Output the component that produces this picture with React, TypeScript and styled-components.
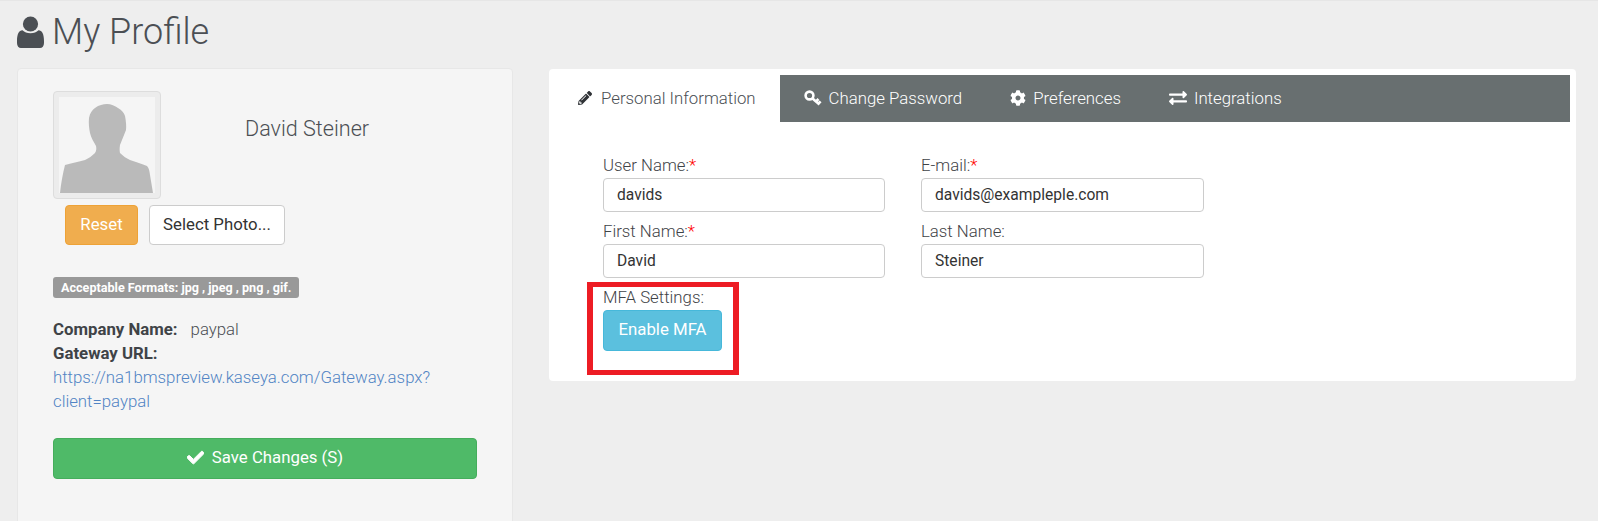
import styled, { createGlobalStyle } from "styled-components";
import { FaPencilAlt, FaCog, FaExchangeAlt, FaCheck } from "react-icons/fa";

const GlobalStyle = createGlobalStyle`
  html, body {
    margin: 0;
    padding: 0;
    height: 100%;
    overflow: hidden;
    background: #eeeeee;
    font-family: Roboto, "Liberation Sans", sans-serif;
    color: #4b4f54;
  }
  * { box-sizing: border-box; }
`;

function UserIcon() {
  return (
    <UserGlyph viewBox="0 0 27 32">
      <circle cx="13.5" cy="8" r="7.6" />
      <path d="M5.5 14.2 C7.5 16.2 10 17.2 13.5 17.2 C17 17.2 19.5 16.2 21.5 14.2 C25 14.2 27 18 27 25 V27 C27 30 25.3 32 23 32 H4 C1.7 32 0 30 0 27 V25 C0 18 2 14.2 5.5 14.2 Z" />
    </UserGlyph>
  );
}

function KeyIcon() {
  return (
    <KeyGlyph viewBox="0 0 18 16">
      <circle cx="5.5" cy="5.5" r="3.9" />
      <path d="M8.5 8.5 L15.5 14.5 M12 11.5 L14.5 9 M14.5 13.6 L16.6 11.4" />
    </KeyGlyph>
  );
}

export default function App() {
  return (
    <>
      <GlobalStyle />
      <Page>
        <Title>
          <UserIcon />
          <span>My Profile</span>
        </Title>
        <Columns>
          <SideCard>
            <PhotoRow>
              <Thumb>
                <Silhouette viewBox="0 0 96 96">
                  <path d="M1 96 C2 86 4 76 6 68 C12 66 20 65 26 63 C30 61 33 59 36 56 C37.5 54 37.5 51 37 49 C35 45 32 41 31 36 C30 31 29.5 26 30 21 C31 16 33 13 36 11 C40 8 44 7 48 7 C52 7 56 9 59 11 C63 13 65 16 66 19 C67 24 67.5 29 67 33 C65 38 63 43 61 48 C60.5 51 60.5 54 61 56 C64 59 67 61 71 63 C77 65 83 67 88 69 C90 71 90.5 74 91 78 C92 84 93 90 94 96 Z" />
                </Silhouette>
              </Thumb>
              <UserName>David Steiner</UserName>
            </PhotoRow>
            <PhotoButtons>
              <ResetButton>Reset</ResetButton>
              <SelectButton>Select Photo...</SelectButton>
            </PhotoButtons>
            <FormatBadge>Acceptable Formats: jpg , jpeg , png , gif.</FormatBadge>
            <Details>
              <div>
                <strong>Company Name:</strong>
                <CompanyValue>paypal</CompanyValue>
              </div>
              <div>
                <strong>Gateway URL:</strong>
              </div>
              <GatewayLink href="#">
                https://na1bmspreview.kaseya.com/Gateway.aspx?
                <br />
                client=paypal
              </GatewayLink>
            </Details>
            <SaveButton>
              <FaCheck size={17} stroke="currentColor" strokeWidth={30} />
              Save Changes (S)
            </SaveButton>
          </SideCard>
          <MainCard>
            <TabBar>
              <Tab $active>
                <FaPencilAlt size={14} />
                Personal Information
              </Tab>
              <Tab>
                <KeyIcon />
                Change Password
              </Tab>
              <Tab>
                <FaCog size={16} />
                Preferences
              </Tab>
              <Tab>
                <FaExchangeAlt size={18} />
                Integrations
              </Tab>
            </TabBar>
            <FormGrid>
              <Field>
                <Label>
                  User Name:<Req>*</Req>
                </Label>
                <Input readOnly value="davids" />
              </Field>
              <Field>
                <Label>
                  E-mail:<Req>*</Req>
                </Label>
                <Input readOnly value="davids@exampleple.com" />
              </Field>
              <Field>
                <Label>
                  First Name:<Req>*</Req>
                </Label>
                <Input readOnly value="David" />
              </Field>
              <Field>
                <Label>Last Name:</Label>
                <Input readOnly value="Steiner" />
              </Field>
              <MfaField>
                <Label>MFA Settings:</Label>
                <MfaButton>Enable MFA</MfaButton>
                <Highlight />
              </MfaField>
            </FormGrid>
          </MainCard>
        </Columns>
      </Page>
    </>
  );
}

const Page = styled.div`
  height: 521px;
  overflow: hidden;
  padding: 0 22px 0 17px;
  border-top: 1px solid #e6e6e6;
`;

const Title = styled.h1`
  display: flex;
  align-items: center;
  gap: 8px;
  height: 67px;
  margin: 0;
  padding-bottom: 5px;
  font-size: 36px;
  font-weight: 300;
  color: #4b4f54;
`;

const UserGlyph = styled.svg`
  flex: none;
  width: 27px;
  height: 32px;
  fill: #4b4f54;
`;

const KeyGlyph = styled.svg`
  flex: none;
  width: 18px;
  height: 16px;
  fill: none;
  stroke: currentColor;
  stroke-width: 2.6;
`;

const Columns = styled.div`
  display: flex;
  align-items: flex-start;
  gap: 36px;
`;

const SideCard = styled.div`
  flex: none;
  width: 496px;
  height: 480px;
  padding: 22px 34px 0 35px;
  background: #f5f5f5;
  border: 1px solid #e7e7e7;
  border-radius: 4px;
`;

const PhotoRow = styled.div`
  display: flex;
  align-items: flex-start;
`;

const Thumb = styled.div`
  flex: none;
  width: 108px;
  height: 108px;
  padding: 5px;
  background: #ececec;
  border: 1px solid #dddddd;
  border-radius: 4px;
`;

const Silhouette = styled.svg`
  display: block;
  width: 96px;
  height: 96px;
  background: #f5f5f5;
  fill: #bababa;
`;

const UserName = styled.div`
  margin: 26px 0 0 84px;
  font-size: 21.6px;
  font-weight: 300;
  line-height: 24px;
`;

const PhotoButtons = styled.div`
  display: flex;
  gap: 11px;
  margin: 6px 0 0 12px;
`;

const ResetButton = styled.button`
  width: 73px;
  height: 40px;
  padding: 0 0 2px;
  font: 400 16.8px Roboto, sans-serif;
  color: #ffffff;
  background: #f0ad4e;
  border: 1px solid #eea236;
  border-radius: 4px;
`;

const SelectButton = styled.button`
  width: 136px;
  height: 40px;
  padding: 0 0 2px;
  font: 400 16.8px Roboto, sans-serif;
  color: #333333;
  background: #ffffff;
  border: 1px solid #cccccc;
  border-radius: 4px;
`;

const FormatBadge = styled.div`
  display: inline-block;
  height: 21px;
  margin-top: 32px;
  padding: 0 8px;
  font-size: 12.6px;
  font-weight: 700;
  line-height: 21px;
  color: #ffffff;
  background: #999999;
  border-radius: 3px;
`;

const Details = styled.div`
  margin-top: 19px;
  font-size: 16.8px;
  font-weight: 300;
  line-height: 24px;

  strong {
    font-weight: 700;
    color: #3f4347;
  }
`;

const CompanyValue = styled.span`
  margin-left: 13px;
`;

const GatewayLink = styled.a`
  color: #5184c4;
  text-decoration: none;
`;

const SaveButton = styled.button`
  display: flex;
  align-items: center;
  justify-content: center;
  gap: 8px;
  width: 424px;
  height: 41px;
  margin-top: 25px;
  padding: 0 0 3px;
  font: 400 16.8px Roboto, sans-serif;
  color: #ffffff;
  background: #4fba68;
  border: 1px solid #45ad5c;
  border-radius: 4px;
`;

const MainCard = styled.div`
  flex: none;
  width: 1027px;
  height: 312px;
  margin-top: 1px;
  padding: 6px 6px 0 9px;
  background: #ffffff;
  border-radius: 4px;
`;

const TabBar = styled.div`
  display: flex;
  height: 47px;
  background: #686f70;
`;

const Tab = styled.div<{ $active?: boolean }>`
  display: flex;
  align-items: center;
  gap: ${(p) => (p.$active ? "9px" : "7px")};
  height: 47px;
  padding: ${(p) => (p.$active ? "0 24px 2px 20px" : "0 24px 2px")};
  font-size: 16.8px;
  font-weight: 300;
  color: ${(p) => (p.$active ? "#4b4f54" : "#ffffff")};
  background: ${(p) => (p.$active ? "#ffffff" : "transparent")};

  svg {
    color: ${(p) => (p.$active ? "#2f3236" : "#ffffff")};
  }
`;

const FormGrid = styled.div`
  display: grid;
  grid-template-columns: 282px 283px;
  column-gap: 36px;
  row-gap: 7px;
  padding: 31px 0 0 45px;
`;

const Field = styled.div`
  display: flex;
  flex-direction: column;
`;

const MfaField = styled(Field)`
  position: relative;
  grid-column: 1 / -1;
  align-items: flex-start;
`;

const Label = styled.label`
  height: 25px;
  font-size: 16.8px;
  font-weight: 300;
  line-height: 24px;
  color: #3f4347;
`;

const Req = styled.span`
  color: #ff0000;
`;

const Input = styled.input`
  width: 100%;
  height: 34px;
  padding: 0 13px;
  font: 400 15.6px Roboto, sans-serif;
  color: #333333;
  background: #ffffff;
  border: 1px solid #cccccc;
  border-radius: 4px;
  outline: none;
`;

const MfaButton = styled.button`
  width: 119px;
  height: 41px;
  padding: 0 0 3px;
  font: 400 16.8px Roboto, sans-serif;
  color: #ffffff;
  background: #5bc0de;
  border: 1px solid #46b8da;
  border-radius: 4px;
`;

const Highlight = styled.div`
  position: absolute;
  top: -3px;
  left: -16px;
  width: 152px;
  height: 93px;
  border-style: solid;
  border-color: #ed1c24;
  border-width: 5px 6px;
  pointer-events: none;
`;
